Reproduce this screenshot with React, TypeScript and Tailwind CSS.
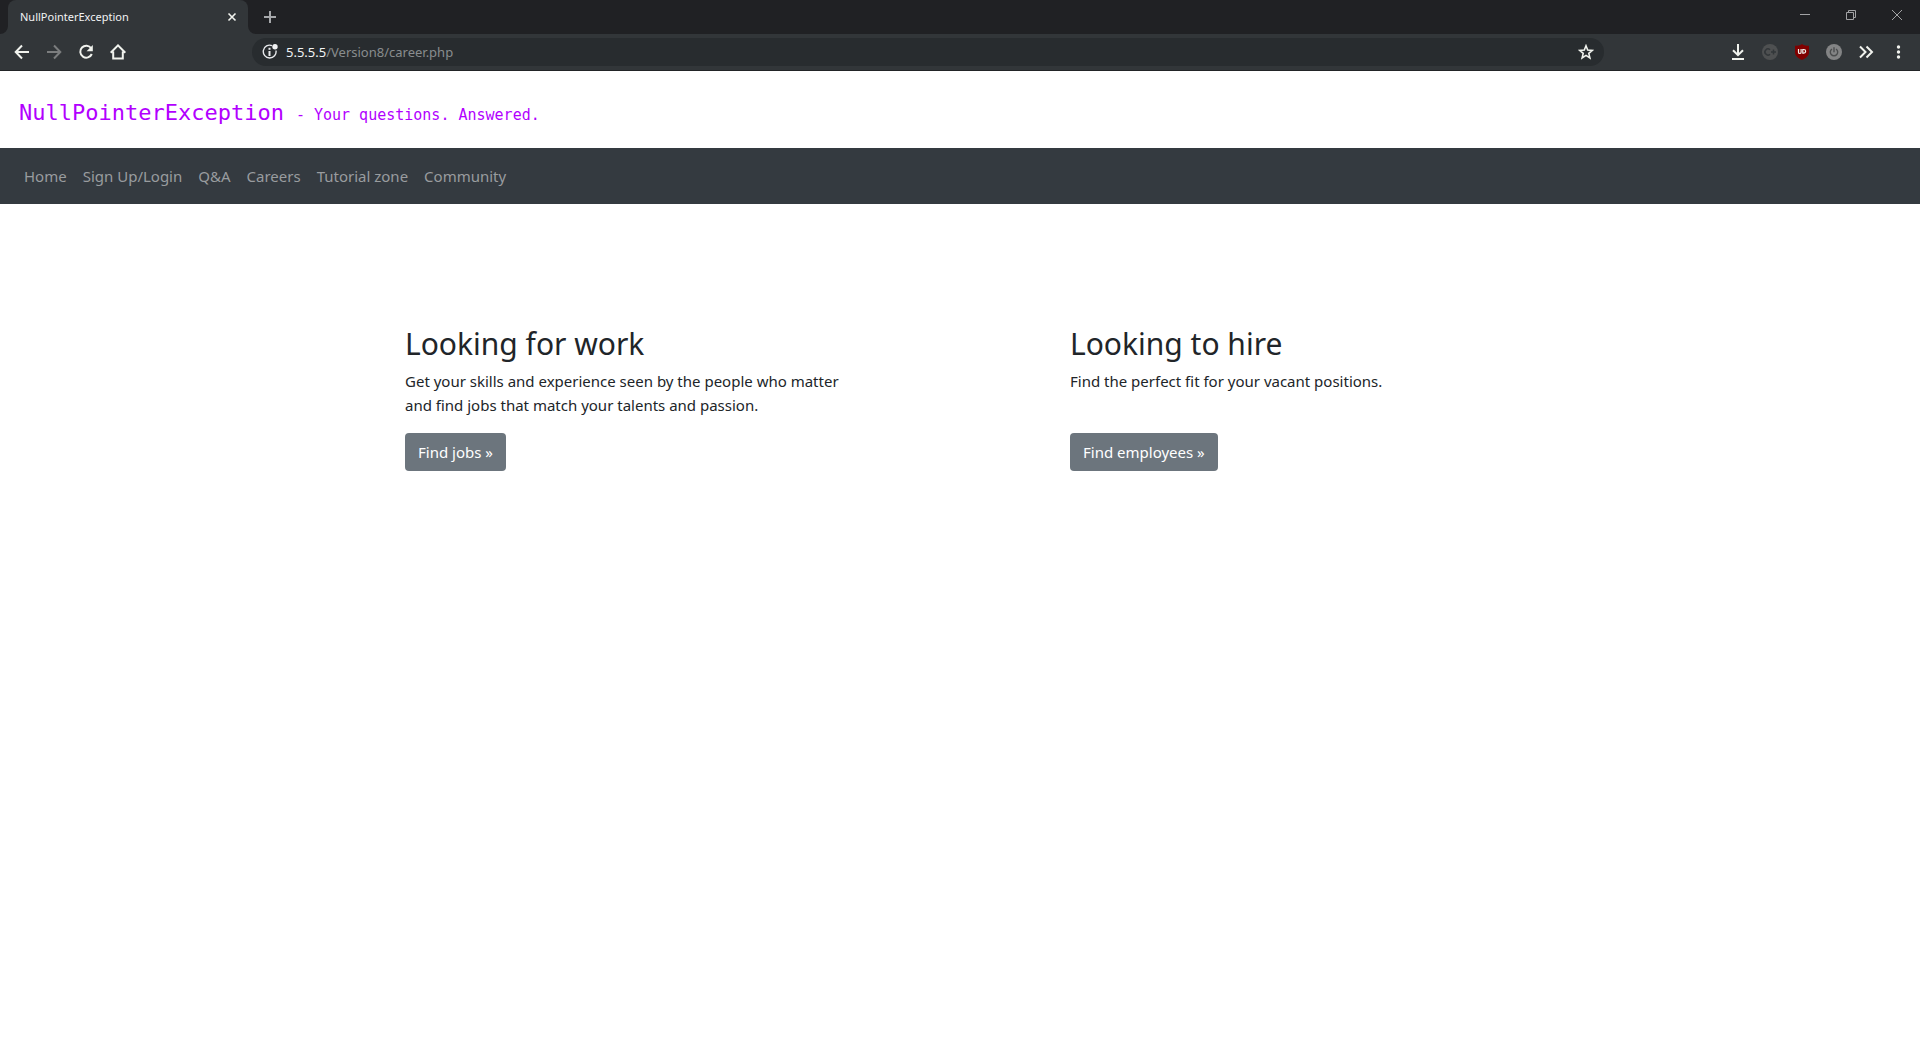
import React from 'react';

const iconBtn = 'flex size-8 items-center justify-center';

function Icon({ children, size = 16, color = '#f1f3ee', width = 2 }: { children: React.ReactNode; size?: number; color?: string; width?: number }) {
  return (
    <svg width={size} height={size} viewBox="0 0 16 16" fill="none" stroke={color} strokeWidth={width} aria-hidden="true">
      {children}
    </svg>
  );
}

function TabStrip() {
  return (
    <div className="flex h-[34px] items-stretch bg-[#202124] pl-2">
      <div className="relative flex w-60 items-center justify-between rounded-t-lg bg-[#323639] pr-2 pl-3">
        <svg className="absolute bottom-0 -left-2" width="8" height="8" aria-hidden="true">
          <path d="M8 0V8H0A8 8 0 0 0 8 0Z" fill="#323639" />
        </svg>
        <svg className="absolute -right-2 bottom-0" width="8" height="8" aria-hidden="true">
          <path d="M0 0V8H8A8 8 0 0 1 0 0Z" fill="#323639" />
        </svg>
        <span className="text-[11px] text-[#f1f3f4]">NullPointerException</span>
        <button aria-label="Close tab" className="flex size-4 items-center justify-center">
          <Icon><path d="M4.500 4.500l7 7M11.500 4.500l-7 7" strokeWidth="1.600" /></Icon>
        </button>
      </div>
      <button aria-label="New tab" className="ml-2 flex w-7 items-center justify-center">
        <Icon color="#a6a8ab"><path d="M8 2v12M2 8h12" /></Icon>
      </button>
      <div className="ml-auto flex items-start">
        <button aria-label="Minimize" className="flex h-[30px] w-[46px] items-center justify-center">
          <Icon color="#a2a3a5" width={1}><path d="M3 7.500h10" /></Icon>
        </button>
        <button aria-label="Restore" className="flex h-[30px] w-[46px] items-center justify-center">
          <Icon color="#a2a3a5" width={1}><path d="M3.500 5.500h7v7h-7zM5.500 5.500v-2h7v7h-2" /></Icon>
        </button>
        <button aria-label="Close" className="flex h-[30px] w-[46px] items-center justify-center">
          <Icon color="#a2a3a5" width={1}><path d="M3 3l10 10M13 3L3 13" /></Icon>
        </button>
      </div>
    </div>
  );
}

function Toolbar() {
  return (
    <div className="flex h-[37px] items-center border-b border-[#222427] bg-[#323639] px-[6px]">
      <button aria-label="Back" className={iconBtn}>
        <Icon><path d="M15 8H2M8 1.500L1.700 8L8 14.500" /></Icon>
      </button>
      <button aria-label="Forward" className={iconBtn}>
        <Icon color="#7b7d7e"><path d="M1 8h13M8 1.500L14.300 8L8 14.500" /></Icon>
      </button>
      <button aria-label="Reload" className={iconBtn}>
        <Icon>
          <path d="M13.200 4.200A6 6 0 1 0 13.800 10" />
          <path d="M14.800 1v6.200H8.600z" fill="#f1f3ee" stroke="none" />
        </Icon>
      </button>
      <button aria-label="Home" className={iconBtn}>
        <Icon><path d="M0.700 8.700L8 1.400l7.300 7.300M3.200 7.500v7h9.600v-7" /></Icon>
      </button>
      <div className="ml-[118px] flex h-7 flex-1 items-center rounded-full bg-[#282c2f] pr-2 pl-[10px]">
        <svg width="16" height="16" viewBox="0 0 16 16" fill="none" stroke="#e8eaed" strokeWidth="1.400" aria-hidden="true">
          <path d="M10 1.600A6.400 6.400 0 1 0 14 6.500" />
          <path d="M7.500 7v5" strokeWidth="2" />
          <path d="M7.500 3.800v2" strokeWidth="2" />
          <circle cx="13" cy="2.800" r="2.700" fill="#f1f3f4" stroke="none" />
        </svg>
        <a href="#" className="ml-2 flex-1 pt-px text-[13px] text-[#898c8e]">
          <span className="text-[#f1f3f4]">5.5.5.5</span>/Version8/career.php
        </a>
        <button aria-label="Bookmark this page" className="flex size-5 items-center justify-center">
          <Icon width={1.6}><path d="M8 1.800l1.700 4.300 4.600.3-3.500 3 1.100 4.500L8 11.400l-3.900 2.500 1.100-4.500-3.500-3 4.600-.3z" /></Icon>
        </button>
      </div>
      <div className="ml-[118px] flex items-center">
        <button aria-label="Downloads" className={iconBtn}>
          <Icon><path d="M8 0v11M3 6.200l5 5 5-5M2 15h12" /></Icon>
        </button>
        <button aria-label="C+ extension" className={iconBtn}>
          <Icon color="#323639">
            <circle cx="8" cy="8" r="8" fill="#4e5051" stroke="none" />
            <path d="M8 5.800A3 3 0 1 0 8 10.200M9 8h5M11.500 5.500v5" strokeWidth="1.500" />
          </Icon>
        </button>
        <button aria-label="Ad blocker" className={iconBtn}>
          <Icon>
            <path d="M8 0C6 1.500 3.500 1.800 1 1.800V8c0 4 3 6.300 7 8 4-1.700 7-4 7-8V1.800C12.500 1.800 10 1.500 8 0Z" fill="#800000" stroke="none" />
            <path d="M4.500 5v3.200a1.300 1.300 0 0 0 2.600 0V5" strokeWidth="1.200" />
            <path d="M8.800 5.500h1a1.700 1.700 0 0 1 0 3.700h-1z" strokeWidth="1.200" />
          </Icon>
        </button>
        <button aria-label="Power extension" className={iconBtn}>
          <Icon color="#4b4d4e">
            <circle cx="8" cy="8" r="8" fill="#838485" stroke="none" />
            <path d="M6 5a3.700 3.700 0 1 0 4 0M8 3.200v5" strokeWidth="1.400" />
          </Icon>
        </button>
        <button aria-label="More extensions" className={iconBtn}>
          <Icon><path d="M2 2.500L7.500 8L2 13.500M8.500 2.500L14 8l-5.500 5.500" /></Icon>
        </button>
        <button aria-label="Menu" className={iconBtn}>
          <Icon>
            <g fill="#f1f3ee" stroke="none">
              <circle cx="8.500" cy="3" r="1.700" />
              <circle cx="8.500" cy="8" r="1.700" />
              <circle cx="8.500" cy="13" r="1.700" />
            </g>
          </Icon>
        </button>
      </div>
    </div>
  );
}

const links = ['Home', 'Sign Up/Login', 'Q&A', 'Careers', 'Tutorial zone', 'Community'];

function Card({ title, text, action, className }: { title: string; text: string; action: string; className: string }) {
  return (
    <section className={className}>
      <h2 className="mb-[6px] text-[30px] leading-[38px]">{title}</h2>
      <p className="mb-4 min-h-12 text-[15px] leading-6">{text}</p>
      <a href="#" className="inline-block rounded bg-[#6c757d] px-[13px] py-[7px] text-[15px] leading-6 text-white">
        {action}
      </a>
    </section>
  );
}

export default function App() {
  return (
    <div className="min-h-screen bg-white font-['Noto_Sans','Open_Sans',sans-serif] text-[#212529]">
      <TabStrip />
      <Toolbar />
      <header className="flex h-[77px] items-center px-[19px] pt-[6px] font-['DejaVu_Sans_Mono',monospace] text-[#b200ff]">
        <h1 className="flex items-baseline gap-3 text-[22px]">
          NullPointerException <small className="text-[15px]">- Your questions. Answered.</small>
        </h1>
      </header>
      <nav className="flex h-14 items-center gap-4 bg-[#343a40] px-6 pt-px text-[15px] text-[#999c9f]">
        {links.map((l) => (
          <a key={l} href="#">{l}</a>
        ))}
      </nav>
      <main className="mx-auto grid max-w-[1140px] grid-cols-12 pt-[121px]">
        <Card
          className="col-span-5 px-[15px]"
          title="Looking for work"
          text="Get your skills and experience seen by the people who matter and find jobs that match your talents and passion."
          action="Find jobs »"
        />
        <Card
          className="col-span-5 col-start-8 px-[15px]"
          title="Looking to hire"
          text="Find the perfect fit for your vacant positions."
          action="Find employees »"
        />
      </main>
    </div>
  );
}
